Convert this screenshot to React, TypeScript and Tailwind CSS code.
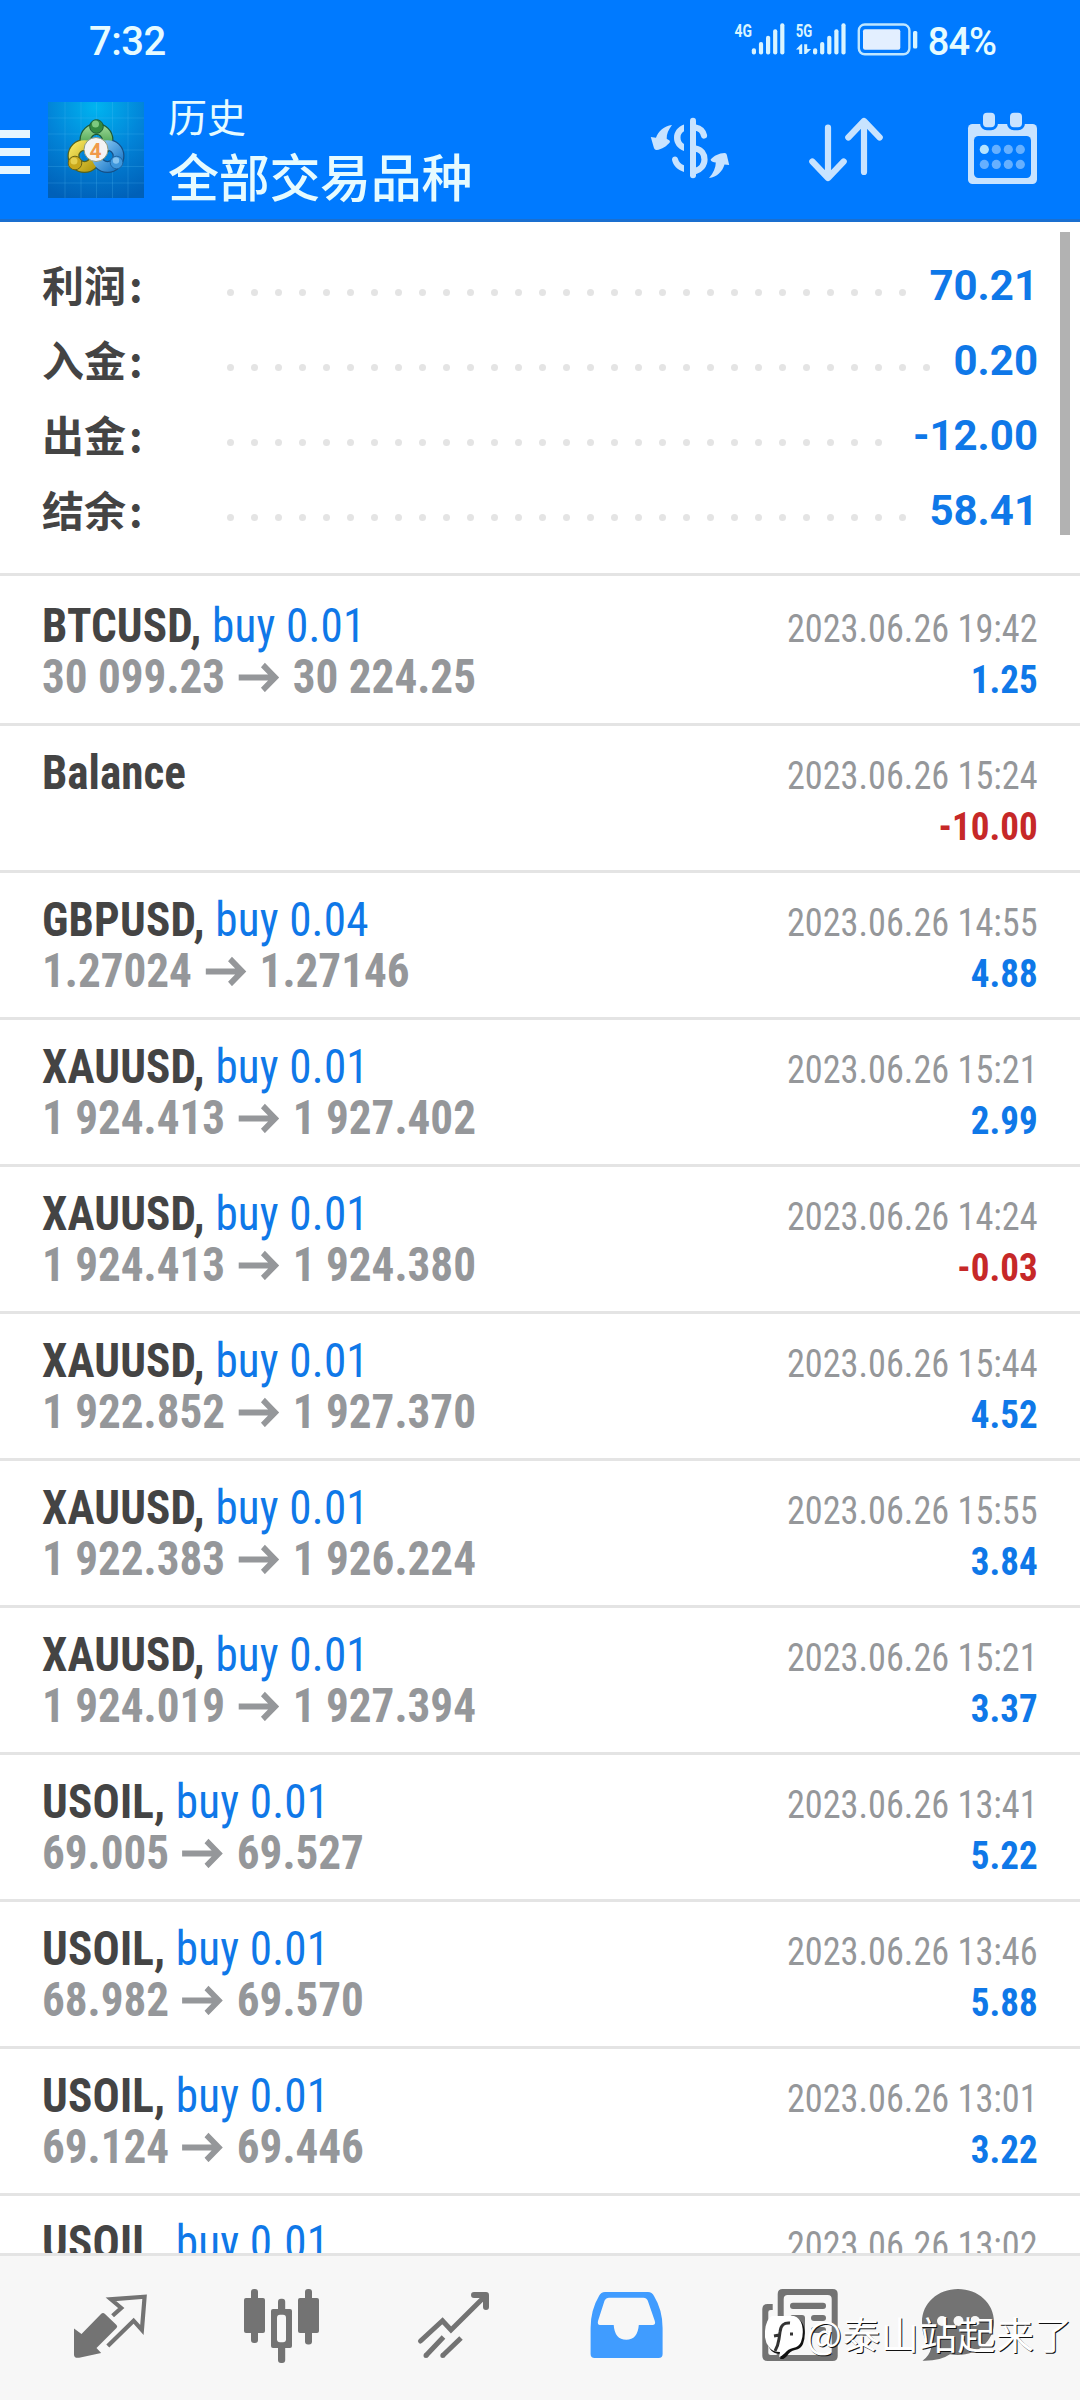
import { clsx } from 'clsx';

type Deal = {
  symbol: string;
  volume?: string;
  open?: string;
  close?: string;
  time: string;
  profit?: string;
};

const summary = [
  { label: '利润', value: '70.21', dots: 29 },
  { label: '入金', value: '0.20', dots: 30 },
  { label: '出金', value: '-12.00', dots: 28 },
  { label: '结余', value: '58.41', dots: 29 },
];

const deals: Deal[] = [
  { symbol: 'BTCUSD,', volume: 'buy 0.01', open: '30 099.23', close: '30 224.25', time: '2023.06.26 19:42', profit: '1.25' },
  { symbol: 'Balance', time: '2023.06.26 15:24', profit: '-10.00' },
  { symbol: 'GBPUSD,', volume: 'buy 0.04', open: '1.27024', close: '1.27146', time: '2023.06.26 14:55', profit: '4.88' },
  { symbol: 'XAUUSD,', volume: 'buy 0.01', open: '1 924.413', close: '1 927.402', time: '2023.06.26 15:21', profit: '2.99' },
  { symbol: 'XAUUSD,', volume: 'buy 0.01', open: '1 924.413', close: '1 924.380', time: '2023.06.26 14:24', profit: '-0.03' },
  { symbol: 'XAUUSD,', volume: 'buy 0.01', open: '1 922.852', close: '1 927.370', time: '2023.06.26 15:44', profit: '4.52' },
  { symbol: 'XAUUSD,', volume: 'buy 0.01', open: '1 922.383', close: '1 926.224', time: '2023.06.26 15:55', profit: '3.84' },
  { symbol: 'XAUUSD,', volume: 'buy 0.01', open: '1 924.019', close: '1 927.394', time: '2023.06.26 15:21', profit: '3.37' },
  { symbol: 'USOIL,', volume: 'buy 0.01', open: '69.005', close: '69.527', time: '2023.06.26 13:41', profit: '5.22' },
  { symbol: 'USOIL,', volume: 'buy 0.01', open: '68.982', close: '69.570', time: '2023.06.26 13:46', profit: '5.88' },
  { symbol: 'USOIL,', volume: 'buy 0.01', open: '69.124', close: '69.446', time: '2023.06.26 13:01', profit: '3.22' },
  { symbol: 'USOIL,', volume: 'buy 0.01', time: '2023.06.26 13:02' },
];

const barTops = [48.3, 42, 35.7, 29.3, 23.3];

function StatusIcons() {
  return (
    <svg width="188" height="40" viewBox="732 20 188 40" fill="#d9f4ff">
      <text x="734.5" y="37.3" fontSize="18.5" fontWeight="700" textLength="17.5" lengthAdjust="spacingAndGlyphs">4G</text>
      {barTops.map((top, i) => (
        <rect key={top} x={751.8 + i * 7.1} y={top} width="4.2" height={54.4 - top} rx="2" />
      ))}
      <text x="795.8" y="37.3" fontSize="18.5" fontWeight="700" textLength="16.5" lengthAdjust="spacingAndGlyphs">5G</text>
      <path d="M796 49.5l5-5.2h1.2V54h-3v-4.5zM804.2 44.3h3v4.6h4L806 54h-1.8z" />
      {barTops.map((top, i) => (
        <rect key={top} x={813 + i * 7.1} y={top} width="4.2" height={54.4 - top} rx="2" />
      ))}
      <rect x="858.8" y="24.5" width="50.6" height="29.8" rx="6" fill="none" stroke="#bfe6ff" strokeWidth="2.4" />
      <rect x="863" y="29.3" width="37.3" height="20.5" rx="2" fill="#e3efff" />
      <rect x="913" y="31" width="4.3" height="17.5" rx="1.5" />
    </svg>
  );
}

function AppLogo() {
  return (
    <svg width="96" height="96" viewBox="0 0 96 96">
      <defs>
        <radialGradient id="logo-bg" cx="0.5" cy="0.05" r="1">
          <stop offset="0" stopColor="#00b4f0" />
          <stop offset="0.5" stopColor="#0284d8" />
          <stop offset="1" stopColor="#0060b8" />
        </radialGradient>
        <linearGradient id="logo-green" x1="0" y1="0" x2="0" y2="1">
          <stop offset="0" stopColor="#8fd08a" />
          <stop offset="1" stopColor="#2f8f3a" />
        </linearGradient>
        <linearGradient id="logo-yellow" x1="0" y1="0" x2="1" y2="1">
          <stop offset="0" stopColor="#f2e25c" />
          <stop offset="1" stopColor="#b59a10" />
        </linearGradient>
        <linearGradient id="logo-blue" x1="0" y1="0" x2="1" y2="1">
          <stop offset="0" stopColor="#8ccbf5" />
          <stop offset="1" stopColor="#1b78c8" />
        </linearGradient>
      </defs>
      <rect width="96" height="96" fill="url(#logo-bg)" />
      <path
        d="M17 0v96M33 0v96M48.5 0v96M64.5 0v96M80 0v96M0 16h96M0 32h96M0 48h96M0 64.5h96M0 81h96"
        stroke="#5cc4f5"
        strokeOpacity="0.22"
        strokeWidth="1"
      />
      <circle cx="48.5" cy="38" r="11" fill="none" stroke="#1d5a35" strokeWidth="12" />
      <circle cx="36.5" cy="54" r="11" fill="none" stroke="#55621c" strokeWidth="12" />
      <circle cx="59.5" cy="54" r="11" fill="none" stroke="#154f86" strokeWidth="12" />
      <circle cx="48.5" cy="38" r="11" fill="none" stroke="url(#logo-green)" strokeWidth="9.5" />
      <circle cx="36.5" cy="54" r="11" fill="none" stroke="url(#logo-yellow)" strokeWidth="9.5" />
      <circle cx="59.5" cy="54" r="11" fill="none" stroke="url(#logo-blue)" strokeWidth="9.5" />
      <circle cx="48.5" cy="24.5" r="6.8" fill="#338a40" stroke="#1d5a35" />
      <circle cx="47.5" cy="22" r="3.5" fill="#7cc97f" />
      <circle cx="27" cy="61" r="6.8" fill="#c9a81c" stroke="#6b6416" />
      <circle cx="26" cy="59" r="3.5" fill="#e6cf4e" />
      <circle cx="68.5" cy="60.5" r="6.3" fill="#3f97dc" stroke="#1f66a5" />
      <circle cx="68" cy="58.5" r="3.2" fill="#84c3f0" />
      <circle cx="48" cy="47.5" r="12" fill="#f4f4f4" stroke="#8a9a80" />
      <text x="47.5" y="55.5" textAnchor="middle" fontSize="21" fontWeight="700" fill="#f09a4a">4</text>
    </svg>
  );
}

function CurrencyIcon() {
  return (
    <svg width="100" height="100" viewBox="0 0 100 100" fill="#c8e3ff">
      <rect x="50" y="17.7" width="6" height="60.6" rx="3" />
      <path d="M44 24.5v6.7c-2.5 1.5-3.5 3.5-3.5 6.3s1 5 3.5 6.5V51c-6.5-2.5-10-7.5-10-13.3S37.5 27 44 24.5zM44 65.3V72c-6.5-2-11-6.5-12-12.2-.3-4 5.5-4.6 6-.8.7 2.9 2.8 5 6 6.3z" />
      <path
        d="M55.5 27.5c5 .9 7.5 3.7 8.5 8M55.5 48.5c6 1 9 5.5 9 11s-4 10-9 11.5"
        fill="none"
        stroke="#c8e3ff"
        strokeWidth="6.2"
        strokeLinecap="round"
      />
      <path d="M32 25c-3.5 4.5-5.5 9-5.3 13.7 1.3 1.2 3.3 1.3 3.3 3.3-3 4-8 7.5-13.5 8-1.5 0-2.2-1-2.7-2.5l-3-10.5 5.2.7C18.5 31 24 26 32 25z" />
      <path d="M69 78c4.5-5 6.8-10.5 6.8-15.5-2.5-.5-4.5-1-5.3-2.8 3.5-4 8.5-6.5 14-6.7 1.5 0 2 .8 2.4 2.2L89.2 65l-4.7-.5C82.5 71.5 77 77 69 78z" />
    </svg>
  );
}

function SortIcon() {
  return (
    <svg width="100" height="100" viewBox="800 100 100 100" fill="none" stroke="#c8e3ff" strokeWidth="6.2" strokeLinecap="round" strokeLinejoin="round">
      <path d="M828 127.5v50M812.3 161.5l15.7 16.5 15.7-16.5" />
      <path d="M864 172v-50M848.3 137.5l15.7-16.5 15.7 16.5" />
    </svg>
  );
}

function CalendarIcon() {
  return (
    <svg width="100" height="100" viewBox="960 100 100 100" fill="#c8e3ff">
      <rect x="968" y="124" width="69" height="60" rx="4.5" />
      <rect x="974" y="136" width="57" height="42" rx="4.5" fill="#007aff" />
      {[983, 1010].map((x) => (
        <rect key={x} x={x - 1.5} y="111.2" width="15" height="17.6" rx="5.5" stroke="#007aff" strokeWidth="3" />
      ))}
      {[984.3, 996.3, 1008.3, 1020.3].map((x, i) => (
        <g key={x}>
          <circle cx={x} cy="149.4" r="4.6" fill={i === 0 ? '#b5e4ff' : '#66b0ff'} />
          <circle cx={x} cy="164.4" r="4.6" fill="#66b0ff" />
        </g>
      ))}
    </svg>
  );
}

function Header() {
  return (
    <header className="flex h-[222px] shrink-0 flex-col border-b-3 border-[#1a6fd0] bg-[#007aff] text-[#e6fbff]">
      <div className="flex h-20 items-center pl-[89px] pr-[84px]">
        <span className="pt-[3px] text-[40px] font-medium leading-none tracking-[-0.5px]">7:32</span>
        <div className="ml-auto flex items-center gap-2">
          <StatusIcons />
          <span className="pt-[3px] text-[38px] font-medium leading-none tracking-[-1px]">84%</span>
        </div>
      </div>
      <div className="flex flex-1 pr-5">
        <div className="mt-[50px] flex w-[30px] flex-col gap-2.5">
          <div className="h-2 bg-[#e6f6ff]" />
          <div className="h-2 bg-[#e6f6ff]" />
          <div className="h-2 bg-[#e6f6ff]" />
        </div>
        <div className="ml-[18px] mt-[22px]">
          <AppLogo />
        </div>
        <div className="ml-6 mt-[9px] flex flex-col font-['Noto_Sans_CJK_SC',sans-serif]">
          <span className="text-[39px] leading-[52px]">历史</span>
          <span className="text-[51px] font-medium leading-[68px] tracking-[-0.3px]">全部交易品种</span>
        </div>
        <div className="ml-auto mt-5 flex gap-[60px]">
          <CurrencyIcon />
          <SortIcon />
          <CalendarIcon />
        </div>
      </div>
    </header>
  );
}

function Summary() {
  return (
    <section className="flex h-[354px] shrink-0 border-b-3 border-[#e4e4e4] pl-[42px] pr-2.5 pt-2.5">
      <div className="flex-1 pt-4">
        {summary.map((row) => (
          <div key={row.label} className="flex h-[75px] items-center text-[42px] font-bold leading-none">
            <span className="w-[176px] pb-[3px] font-['Noto_Sans_CJK_SC',sans-serif] text-[#444]">
              {row.label}
              <span className="ml-[3px]">:</span>
            </span>
            <div className="mt-[13px] flex">
              {Array.from({ length: row.dots }, (_, i) => (
                <span key={i} className="flex w-6 justify-center">
                  <span className="size-[7px] rounded-full bg-[#e4e4e4]" />
                </span>
              ))}
            </div>
            <span className="ml-auto text-[#0f78e8]">{row.value}</span>
          </div>
        ))}
      </div>
      <div className="ml-[22px] h-[303px] w-2.5 bg-[#b2b2b2]" />
    </section>
  );
}

function DealRow({ deal }: { deal: Deal }) {
  return (
    <div className="flex h-[147px] shrink-0 justify-between border-b-3 border-[#e4e4e4] px-[42px] pt-[21px] first:h-[150px] first:pt-[24px]">
      <div className="origin-left scale-x-94 text-[48px] leading-[51px]">
        <div className={clsx(deal.volume && 'tracking-[0.2px]')}>
          <span className="font-bold text-[#444]">{deal.symbol}</span>
          {deal.volume && <span className="text-[#0f78e8]"> {deal.volume}</span>}
        </div>
        {deal.open && (
          <div className="flex items-center font-bold text-[#95979a]">
            <span>{deal.open}</span>
            <svg width="44" height="30" viewBox="0 0 44 30" className="mx-[14px]" fill="none" stroke="currentColor" strokeWidth="6">
              <path d="M0 15.5h39M26 3l13 12.5L26 28" />
            </svg>
            <span>{deal.close}</span>
          </div>
        )}
      </div>
      <div className="pt-1 text-right text-[39px] leading-[51px]">
        <div className="origin-right scale-x-93 text-[#95979a]">{deal.time}</div>
        {deal.profit && (
          <div
            className={clsx(
              'origin-right scale-x-95 font-bold',
              deal.profit.startsWith('-') ? 'text-[#c62828]' : 'text-[#0f78e8]'
            )}
          >
            {deal.profit}
          </div>
        )}
      </div>
    </div>
  );
}

function TabBar() {
  return (
    <nav className="relative flex h-[147px] shrink-0 items-center gap-[78px] border-t-3 border-[#e4e4e4] bg-[#f7f7f7] pl-[70px]">
      <svg width="92" height="92" viewBox="70 102 92 92" fill="#737373">
        <path d="M74 148.5l7.5 5.5 19.5-20q2-2 4 0l11.5 11q1.5 1.5 0 3l-20 20 4.7 5-22 4.7q-5.2.8-5.2-3z" />
        <path d="M112.6 135.7l8.6-7.7-10.3-8.7 33.7-2.6-2.7 33.3-8.3-9.3-25.8 25.3" fill="none" stroke="#737373" strokeWidth="4.2" />
      </svg>
      <svg width="92" height="92" viewBox="240 102 92 92" fill="#737373">
        <rect x="251" y="109" width="7" height="54" rx="3" />
        <rect x="244" y="118" width="21" height="35" rx="2" />
        <rect x="278" y="118.7" width="7.2" height="64.3" rx="3" />
        <rect x="271" y="129" width="21" height="39" rx="2" />
        <rect x="277" y="134.7" width="9" height="27.6" rx="3" fill="#f7f7f7" />
        <rect x="305" y="109" width="7" height="55.5" rx="3" />
        <rect x="298" y="118" width="21" height="35" rx="2" />
      </svg>
      <svg width="92" height="92" viewBox="410 102 92 92" fill="none" stroke="#737373" strokeWidth="5">
        <path d="M420.5 161l22-20.3 8.5 9.3 34.5-34.3" strokeLinecap="round" />
        <path d="M474 115h12v12" strokeWidth="6" strokeLinecap="round" strokeLinejoin="round" />
        <path d="M426 175.5l17.5-18.5M442.8 175.5l18.2-17.5" />
        <path d="M426 175.5h0M442.8 175.5h0" strokeLinecap="round" />
      </svg>
      <svg width="92" height="92" viewBox="580 102 92 92">
        <path
          d="M605 112h43q4 0 6 4 8.6 14 8.6 32v26q0 4-4 4h-64q-4 0-4-4v-26q0-18 8.4-32 2-4 6-4zM609 117.7q-3 0-4.5 3L598 141q-.8 4 2 4h13.7q1 14.7 12.5 14.7t12.6-14.7h13.7q3.5 0 2.3-4l-7-20.3q-1.3-3-4.3-3z"
          fill="#409cff"
          fillRule="evenodd"
        />
      </svg>
      <svg width="92" height="92" viewBox="750 102 92 92" fill="#737373">
        <path d="M782.7 109h50q5 0 5 5v62q0 5-5 5h-65q-5.4 0-5.4-5v-47q0-5 5.4-5h5v6h-2q-2.4 0-2.4 2v41q0 2 2.4 2h5q2 0 2-2v-59q0-5 5-5zM787.7 115q-4 0-4 4v56h48v-56q0-4-4-4z" fillRule="evenodd" />
        <rect x="790" y="122.7" width="36" height="6.3" rx="3" />
        <rect x="790" y="135" width="15" height="20" rx="3" />
        <rect x="811" y="135" width="15" height="6" rx="3" />
        <rect x="811" y="147" width="15" height="6" rx="3" />
      </svg>
      <svg width="92" height="92" viewBox="920 102 92 92" fill="#737373">
        <path d="M958 109c20 0 36 14 36 33s-16 33-36 33q-4 0-8-.8-10 7-27.5 6.5 7-5 8.5-12.5c-6-6-9-15-9-26.2 0-19 16-33 36-33z" />
        <circle cx="942" cy="141" r="5" fill="#f7f7f7" />
        <circle cx="958.5" cy="141" r="5" fill="#f7f7f7" />
        <circle cx="975" cy="141" r="5" fill="#f7f7f7" />
      </svg>
      {/* author mark laid over the last two tabs */}
      <div className="absolute left-[765px] top-[51px] flex items-center gap-px whitespace-nowrap">
        <svg width="40" height="44" viewBox="0 0 40 44" className="mt-2">
          <path d="M8 2h22q6 2 8 9 2 9-1 17-2 5-8 6-5 1-8 6-4 4-7 4l1-6q-8 0-11-5Q0 27 1 17 2 5 8 2z" fill="#111" transform="translate(1 1)" />
          <path d="M7 1h22q6 2 8 9 2 9-1 17-2 5-8 6-5 1-8 5-3 3-6 4l1-5q-8 0-11-5Q-1 26 0 16 1 4 7 1z" fill="#fff" />
          <path d="M25 8q-9-1-10 9l-1 7q-1 7-4 12M9 21l5-1M25 19h3" fill="none" stroke="#333" strokeWidth="3" />
        </svg>
        <span className="font-['Noto_Sans_CJK_SC',sans-serif] text-[38px] leading-[50px] tracking-[0.4px] text-white [text-shadow:1px_1px_0_#111]">
          @泰山站起来了
        </span>
      </div>
    </nav>
  );
}

export default function App() {
  return (
    <div className="flex h-[2400px] w-[1080px] flex-col overflow-hidden bg-white font-['Roboto',sans-serif]">
      <Header />
      <Summary />
      <main className="flex min-h-0 flex-1 flex-col overflow-hidden font-['Roboto_Condensed','Roboto',sans-serif] [font-stretch:75%]">
        {deals.map((deal, i) => (
          <DealRow key={i} deal={deal} />
        ))}
      </main>
      <TabBar />
    </div>
  );
}
